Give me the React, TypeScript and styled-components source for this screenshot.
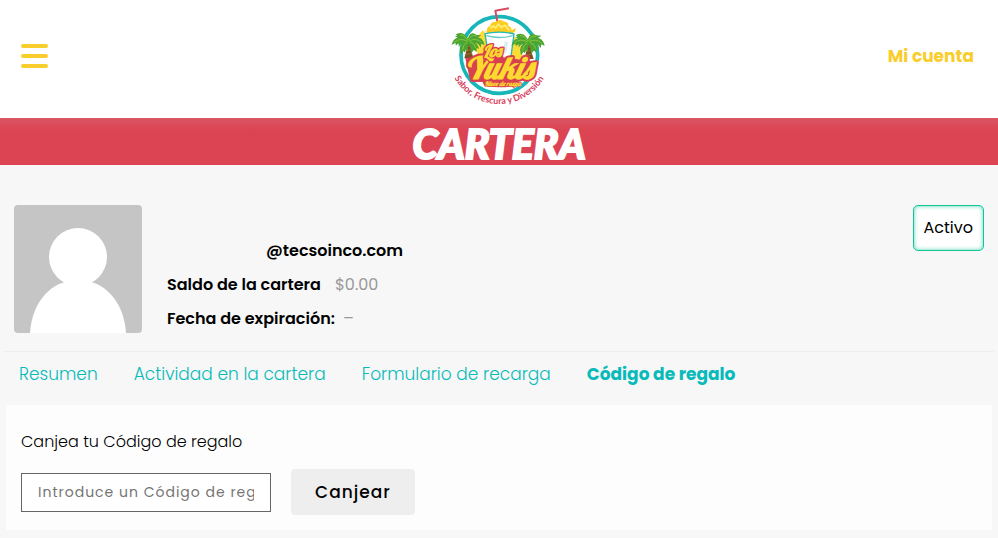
import React, { useState } from "react";
import styled, { createGlobalStyle } from "styled-components";

const GlobalStyle = createGlobalStyle`
  *, *::before, *::after { box-sizing: border-box; }
  body {
    margin: 0;
    background: #f7f7f7;
    color: #000;
    font-family: Poppins, Inter, "Open Sans", sans-serif;
    font-size: 16px;
    line-height: 24px;
  }
`;

const Header = styled.header`
  display: grid;
  grid-template-columns: 1fr auto 1fr;
  align-items: center;
  padding: 5px 20px 11px;
  background: #fff;
`;

const MenuButton = styled.button`
  justify-self: start;
  display: flex;
  padding: 0;
  border: 0;
  background: none;
  cursor: pointer;
`;

const HomeLink = styled.a`
  display: flex;
`;

const AccountLink = styled.a`
  justify-self: end;
  padding-right: 4px;
  color: #f9cd2b;
  font-size: 17px;
  font-weight: 700;
  text-decoration: none;
`;

const TitleBar = styled.div`
  display: flex;
  justify-content: center;
  background: linear-gradient(#db5563, #dc4453 12px);
`;

const Title = styled.h1`
  margin: 0;
  padding-top: 4px;
  color: #fff;
  font-family: Lato, sans-serif;
  font-size: 41px;
  font-style: italic;
  font-weight: 900;
  line-height: 43px;
  -webkit-text-stroke: 2px #fff;
`;

const Main = styled.main`
  padding: 40px 4px 8px;
`;

const Profile = styled.section`
  display: flex;
  align-items: flex-start;
  gap: 25px;
  padding: 0 10px 15px;
  border-bottom: 1px solid #eee;
`;

const AvatarFrame = styled.div`
  display: flex;
  flex: none;
  overflow: hidden;
  border-radius: 4px;
`;

const Details = styled.div`
  flex: 1;
  padding-top: 29px;
  line-height: 34px;
`;

const Email = styled.div`
  padding-left: 99px;
  font-weight: 600;
`;

const DetailRow = styled.div<{ $gap: number }>`
  display: flex;
  gap: ${(p) => p.$gap}px;
`;

const DetailLabel = styled.span`
  font-weight: 600;
`;

const DetailValue = styled.span`
  color: #999;
`;

const Status = styled.div`
  padding: 10px;
  border: 1px solid #0ec696;
  border-radius: 5px;
  background: #fff;
  box-shadow: inset 0 0 4px rgba(14, 198, 150, 0.7);
`;

const Tabs = styled.nav`
  display: flex;
  gap: 36px;
  padding: 10px 15px 19px;
`;

const TabLink = styled.a<{ $active: boolean }>`
  color: #08baba;
  font-size: 17px;
  font-weight: ${(p) => (p.$active ? 700 : 300)};
  text-decoration: none;
`;

const Panel = styled.form`
  margin: 0 2px;
  padding: 25px 15px 15px;
  background: #fdfdfd;
`;

const FieldLabel = styled.label`
  display: block;
  margin-bottom: 15px;
  font-weight: 300;
`;

const FieldRow = styled.div`
  display: flex;
  align-items: center;
  gap: 20px;
`;

const CodeInput = styled.input`
  width: 250px;
  height: 39px;
  padding: 0 16px;
  border: 1px solid #666;
  border-radius: 0;
  background: #fff;
  font-family: inherit;
  font-size: 14px;
  letter-spacing: 1px;

  &::placeholder {
    color: #757575;
  }
`;

const SubmitButton = styled.button`
  padding: 11px 24px;
  border: 0;
  border-radius: 4px;
  background: #eee;
  color: #000;
  font-family: inherit;
  font-size: 17px;
  font-weight: 500;
  line-height: 24px;
  letter-spacing: 1px;
  cursor: pointer;
`;

const LogoDrawing = styled.svg`
  overflow: visible;
`;

const LogoText = styled.text`
  font-family: Lobster, Lato, sans-serif;
  font-style: italic;
  font-weight: 700;
  fill: #fbd92f;
  stroke: #d8404f;
  stroke-linejoin: round;
  paint-order: stroke;
`;

const LogoMotto = styled.text`
  font-family: Lato, sans-serif;
  font-size: 27px;
  font-weight: 700;
  fill: #d8405a;
`;

const MenuIcon = () => (
  <svg width="28" height="24" viewBox="0 0 28 24" aria-hidden="true">
    <path d="M3 2H26M3 12H26M3 22H26" stroke="#f9cd2b" strokeWidth="4" strokeLinecap="round" />
  </svg>
);

const Palm = ({ x, y }: { x: number; y: number }) => (
  <g transform={`translate(${x} ${y})`}>
    <path d="M-4 5Q-6 30-13 51H15Q5 28 5 4Z" fill="#795125" />
    <path d="M-7 17L6 14M-9 29L8 25M-12 40L11 36" stroke="#b37b31" strokeWidth="2" />
    <path
      d="M-2-2Q-15-31-35-20L-28-16-35-14-24-10Q-42-11-48 7L-38 2-37 9-28 2-28 11Q-21 2-10 3Q-29 14-22 35L-16 26-12 30-9 21-4 24Q-5 12 0 5Q8 12 9 31L15 23 22 28 22 17 28 19Q23 5 10 2Q27 0 35 13L36 4 45 8Q39-12 22-11L32-17 22-18Q5-32-2-2Z"
      fill="#4ca532"
      stroke="#4ca532"
      strokeWidth="4"
    />
    <path
      d="M-2-2Q-14-21-26-19M-4 0Q-25-12-42 2M-4 2Q-19 11-18 26M3 1Q18 5 22 21M3-2Q23-11 38 3M0-3Q6-21 23-17"
      fill="none" stroke="#85c83c" strokeWidth="3"
    />
  </g>
);

const Logo = () => (
  <LogoDrawing width="96" height="102" viewBox="33 15 288 306" role="img" aria-label="Los Yukis">
    <circle cx="178" cy="165" r="115" fill="#fff" stroke="#16b6b9" strokeWidth="11" />
    <path d="M115 171Q94 119 129 91L145 110H222Q245 121 248 174L222 203H135Z" fill="#ffdc35" />
    <path d="M174 75L166 32L207 25" fill="none" stroke="#d74a60" strokeWidth="6" strokeLinejoin="round" />
    <path d="M141 95Q139 81 151 77Q153 64 166 66Q181 54 192 65Q206 65 205 78Q215 81 215 91L226 84V94L213 103H147L131 89Z" fill="#fccc20" />
    <path d="M151 84L161 78L167 84L175 72L184 82L195 76L208 91" stroke="#fff078" strokeWidth="5" fill="none" />
    <path d="M135 101Q179 91 222 102L211 184H148Z" fill="#fff" stroke="#24b8b4" strokeWidth="4" />
    <path d="M139 107Q179 118 218 107" fill="none" stroke="#65cbc2" strokeWidth="4" />
    <path d="M199 125L194 158" stroke="#d9efec" strokeWidth="10" />
    <Palm x={86} y={124} />
    <Palm x={266} y={126} />
    <path d="M76 174L125 172L133 147H184L190 172L276 184L284 225L238 239L234 257Q177 267 133 257L128 246L91 245Z" fill="#d8404f" />
    <LogoText x="74" y="238" fontSize="92" strokeWidth="12">Yukis</LogoText>
    <LogoText x="129" y="171" fontSize="50" strokeWidth="8">Los</LogoText>
    <LogoText x="134" y="257" fontSize="19" strokeWidth="3">Nieve de raspa</LogoText>
    <path id="motto-curve" d="M43 234A155 155 0 0 0 323 211" fill="none" />
    <LogoMotto>
      <textPath href="#motto-curve">Sabor, Frescura y Diversión</textPath>
    </LogoMotto>
  </LogoDrawing>
);

const Avatar = () => (
  <svg width="128" height="128" viewBox="0 0 128 128" role="img" aria-label="Avatar">
    <path d="M0 0H128V128H0Z" fill="#c5c5c5" />
    <circle cx="64" cy="52" r="29" fill="#fff" />
    <path d="M16 128C18 96 38 75 64 75S110 96 112 128Z" fill="#fff" />
  </svg>
);

const tabs = ["Resumen", "Actividad en la cartera", "Formulario de recarga", "Código de regalo"];

export default function App() {
  const [active, setActive] = useState("Código de regalo");

  return (
    <>
      <GlobalStyle />
      <Header>
        <MenuButton type="button" aria-label="Menú"><MenuIcon /></MenuButton>
        <HomeLink href="#inicio"><Logo /></HomeLink>
        <AccountLink href="#cuenta">Mi cuenta</AccountLink>
      </Header>
      <TitleBar><Title>CARTERA</Title></TitleBar>
      <Main>
        <Profile>
          <AvatarFrame><Avatar /></AvatarFrame>
          <Details>
            <Email>@tecsoinco.com</Email>
            <DetailRow $gap={14}>
              <DetailLabel>Saldo de la cartera</DetailLabel>
              <DetailValue>$0.00</DetailValue>
            </DetailRow>
            <DetailRow $gap={8}>
              <DetailLabel>Fecha de expiración:</DetailLabel>
              <DetailValue>–</DetailValue>
            </DetailRow>
          </Details>
          <Status>Activo</Status>
        </Profile>
        <Tabs>
          {tabs.map((tab) => (
            <TabLink key={tab} href="#cartera" $active={tab === active} onClick={() => setActive(tab)}>
              {tab}
            </TabLink>
          ))}
        </Tabs>
        <Panel onSubmit={(event) => event.preventDefault()}>
          <FieldLabel htmlFor="gift-code">Canjea tu Código de regalo</FieldLabel>
          <FieldRow>
            <CodeInput id="gift-code" type="text" placeholder="Introduce un Código de regalo" />
            <SubmitButton type="submit">Canjear</SubmitButton>
          </FieldRow>
        </Panel>
      </Main>
    </>
  );
}
